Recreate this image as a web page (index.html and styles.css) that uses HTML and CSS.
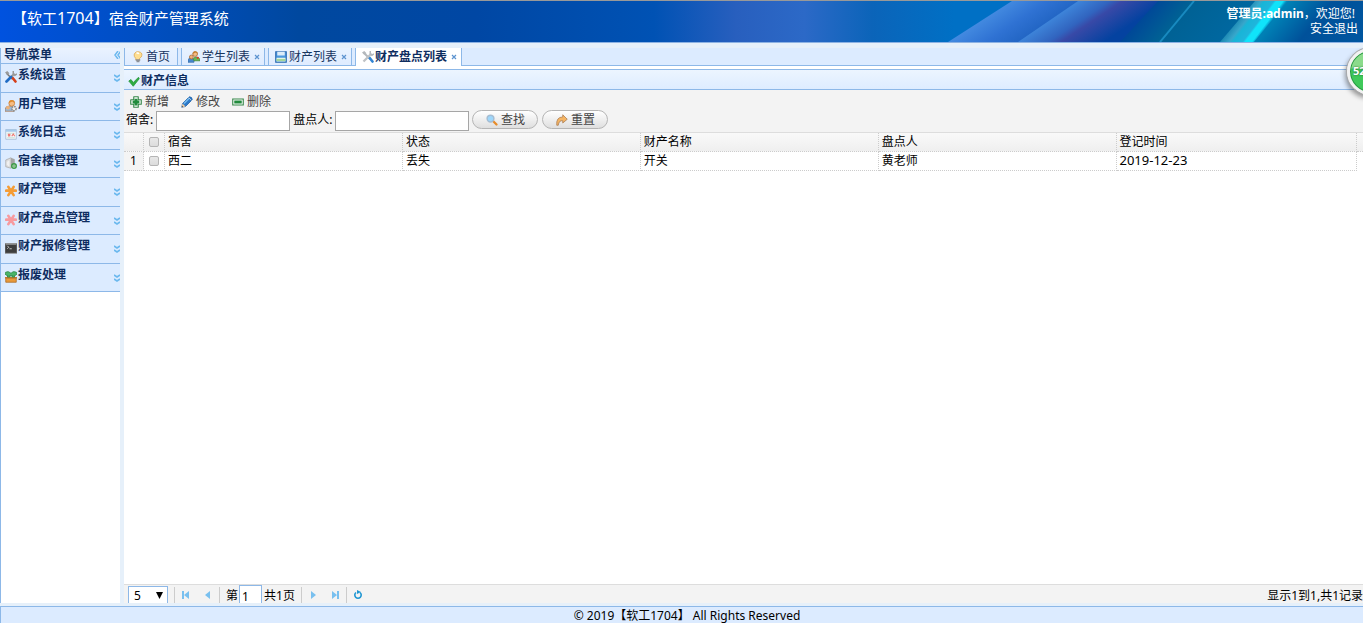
FILE: index.html
```html
<!DOCTYPE html>
<html lang="zh-CN">
<head>
<meta charset="utf-8">
<title>宿舍财产管理系统</title>
<link rel="stylesheet" href="styles.css">
</head>
<body>
<svg class="defs" aria-hidden="true">
  <symbol id="tools" viewBox="0 0 16 16"><path d="M2 2l9 9" stroke="#b4b8bc" stroke-width="2.500"/><path d="M10 9l4 5" stroke="#3285d4" stroke-width="3.500" stroke-linecap="round"/><path d="M12 4L2 14" stroke="#bfc2c5" stroke-width="3"/><path d="M10 0v4l3 3 3-2V3l-2 1-2-1V0z" fill="#b4b8bc"/><path d="M0 2l3-2 3 3-3 2z" fill="#b4b8bc"/></symbol>
  <symbol id="system" viewBox="0 0 16 16"><path d="M2 3l8 8" stroke="#777" stroke-width="2"/><path d="M10 9l4 5" stroke="#d5401c" stroke-width="3.500" stroke-linecap="round"/><path d="M12 4L8 8" stroke="#999" stroke-width="2.500"/><path d="M8 8l-6 6" stroke="#216cc4" stroke-width="3.600" stroke-linecap="round"/><path d="M10 0v4l3 3 3-2V3l-2 1-2-1V0zM0 2l3-2 3 3-3 2z" fill="#999"/></symbol>
  <symbol id="users" viewBox="0 0 16 16"><path d="M0 15v-3q1-3 4-3 4 0 4 4v2z" fill="#4787cd" stroke="#376da8"/><circle cx="4.500" cy="8" r="2.600" fill="#f2b078" stroke="#a76a35"/><path d="M7 11q1-3 4-3t5 3v2H8z" fill="#69b951" stroke="#43863a"/><circle cx="9.500" cy="4" r="3.200" fill="#f4bd84" stroke="#a76329"/><path d="M6 4Q7 0 10 .5q3 0 3 3L10 2z" fill="#c4812f"/><circle cx="13" cy="9" r="1.500" fill="#d63c2b"/></symbol>
  <symbol id="usergear" viewBox="0 0 16 16"><path d="M0 15v-3q1-4 6-4 6 0 6 5v2z" fill="#9ab9d8" stroke="#a9764e"/><circle cx="9" cy="4.500" r="3.800" fill="#f5bd84" stroke="#c07a35"/><path d="M5 4Q5 0 9 0q4 0 4 4l-3-2z" fill="#e08a2c"/><circle cx="12" cy="11.500" r="2.800" fill="#eee" stroke="#888" stroke-width="2" stroke-dasharray="2 1"/><circle cx="4" cy="10" r="2.500" fill="#edb27a"/></symbol>
  <symbol id="log" viewBox="0 0 16 16"><path d="M1 2h14v13H1z" fill="#f4f8fc" stroke="#9eb4cc"/><path d="M1 2h14v3H1z" fill="#a6cbed"/><path d="M3 7h10M3 13h10" stroke="#b8d9ca"/><path d="M4 8l3 3M7 8l-3 3M9 11l2-3 2 3" fill="none" stroke="#ef7770" stroke-width="1.500"/></symbol>
  <symbol id="building" viewBox="0 0 16 16"><path d="M1 4l7-3v14l-7-2z" fill="#ddd" stroke="#aaa"/><path d="M8 1l5 2v11H8z" fill="#a5a5a5"/><path d="M3 6v5M5 5v7" stroke="#fff"/><circle cx="12" cy="12" r="3" fill="#fff" stroke="#3d9a46" stroke-width="2"/><path d="M10 12h4M12 10v4" stroke="#3d9a46"/></symbol>
  <symbol id="star" viewBox="0 0 16 16"><path d="M4.500 2.500l7 11M11.500 2.500l-7 11M1.500 7.500h13" stroke="currentColor" stroke-width="3.500" stroke-linecap="round"/></symbol>
  <symbol id="terminal" viewBox="0 0 16 16"><path d="M0 2h16v13H0z" fill="#3e3e3e" stroke="#888"/><path d="M1 3h14" stroke="#bbb"/><path d="M3 5l2 2-2 2M6 9h3" fill="none" stroke="#eee"/></symbol>
  <symbol id="plants" viewBox="0 0 16 16"><path d="M1 9h14v6H1z" fill="#e99a3b" stroke="#a86722"/><path d="M0 9h16" stroke="#bf782c" stroke-width="2"/><path d="M4 8V4M11 8V4" stroke="#397d37"/><path d="M0 4q0-3 3-3 1-1 5 2 3-3 5-2 3 0 3 3-1 2-4 2l1 2H9l1-2H6l1 2H3l1-2Q1 6 0 4z" fill="#4bb56a" stroke="#2a8642"/></symbol>
  <symbol id="bulb" viewBox="0 0 16 16"><path d="M5 10Q2 7 3 4q2-4 6-3 5 1 4 5 0 2-3 4v2H5z" fill="#ffdf91" stroke="#d9a44f"/><path d="M6 3q2-1 3 1" stroke="#fff" fill="none" stroke-width="2"/><path d="M5 12h6M6 14h4" stroke="#8d9097" stroke-width="2"/></symbol>
  <symbol id="disk" viewBox="0 0 16 16"><path d="M1 1h14v14H1z" fill="#4b98df" stroke="#2c6ab0" stroke-width="1.500"/><path d="M3 1h10v5H3z" fill="#dcecf9"/><path d="M2 9h12v5H2z" fill="#e4f4e2"/><path d="M2 11h12v2H2z" fill="#8fcd83"/></symbol>
  <symbol id="check" viewBox="0 0 16 16"><path d="M1 8l3-2 3 4 7-7 1 2-8 10z" fill="#2ead42" stroke="#249339"/></symbol>
  <symbol id="plus" viewBox="0 0 16 16"><path d="M5 1h6v4h4v6h-4v4H5v-4H1V5h4z" fill="#fff" stroke="#37874a" stroke-width="1.500" stroke-linejoin="round"/><path d="M8 3.500v9M3.500 8h9" stroke="#218b3c" stroke-width="4"/></symbol>
  <symbol id="pencil" viewBox="0 0 16 16"><path d="M1 15l1-5 9-9q4 0 4 4l-9 9z" fill="#2c79c9" stroke="#2262a4"/><path d="M4 10l7-7" stroke="#78bdf1" stroke-width="2"/><path d="M1 15l1-5 4 4z" fill="#f4cda0"/><path d="M1 15l1-2 1 1z" fill="#333"/><path d="M10 2l4 4" stroke="#ddd"/></symbol>
  <symbol id="minus" viewBox="0 0 16 16"><path d="M1 4h14v8H1z" fill="#fff" stroke="#37874a" stroke-width="1.500"/><path d="M3 8h10" stroke="#218b3c" stroke-width="4"/></symbol>
  <symbol id="search" viewBox="0 0 16 16"><path d="M9 9l5 5" stroke="#e78c2a" stroke-width="3" stroke-linecap="round"/><circle cx="6" cy="6" r="4.500" fill="#9ed7fb" stroke="#a5bdd3" stroke-width="2"/></symbol>
  <symbol id="reset" viewBox="0 0 16 16"><path d="M1 15q-1-11 8-11V1l6 6-6 5V9q-5-1-6 6z" fill="#f5b564" stroke="#a8794f" stroke-linejoin="round"/></symbol>
  <symbol id="down" viewBox="0 0 6 8"><path d="M0 1l3 2 3-2M0 5l3 2 3-2" fill="none" stroke="#6bb8ee" stroke-width="1.600"/></symbol>
</svg>

<header class="banner">
  <svg class="banner-art" viewBox="0 0 1363 42" preserveAspectRatio="none" aria-hidden="true">
    <defs>
      <linearGradient id="base"><stop offset="0" stop-color="#0052df"/><stop offset=".11" stop-color="#004ec0"/><stop offset=".22" stop-color="#00489f"/><stop offset=".35" stop-color="#0047a4"/><stop offset=".48" stop-color="#0052b4"/><stop offset=".54" stop-color="#285fbe"/><stop offset=".59" stop-color="#2c69c7"/><stop offset=".64" stop-color="#0b64b9"/><stop offset=".7" stop-color="#0070c5"/></linearGradient>
      <linearGradient id="s1" gradientUnits="userSpaceOnUse" x1="948" y1="42" x2="978" y2="86"><stop offset="0" stop-color="#438ae0"/><stop offset=".4" stop-color="#2f72d3"/><stop offset="1" stop-color="#195cb9"/></linearGradient>
      <linearGradient id="s2" gradientUnits="userSpaceOnUse" x1="1018" y1="42" x2="1052" y2="92"><stop offset="0" stop-color="#3d83d8"/><stop offset=".28" stop-color="#3164bf"/><stop offset=".4" stop-color="#3849a7"/><stop offset=".8" stop-color="#0442a0"/></linearGradient>
      <linearGradient id="s3" gradientUnits="userSpaceOnUse" x1="1120" y1="42" x2="1194" y2="103"><stop offset="0" stop-color="#004798"/><stop offset=".3" stop-color="#006194"/><stop offset="1" stop-color="#006aa4"/></linearGradient>
      <linearGradient id="s4" gradientUnits="userSpaceOnUse" x1="1218" y1="42" x2="1242" y2="60"><stop offset="0" stop-color="#1682ae"/><stop offset=".3" stop-color="#38a6ca"/><stop offset=".4" stop-color="#18b5d7"/><stop offset=".65" stop-color="#20b5dc"/><stop offset=".72" stop-color="#10e3fa"/><stop offset=".9" stop-color="#10e3fa"/><stop offset="1" stop-color="#0088bd"/></linearGradient>
      <linearGradient id="s5" gradientUnits="userSpaceOnUse" x1="1256" y1="42" x2="1319" y2="94"><stop offset="0" stop-color="#0080b5"/><stop offset=".4" stop-color="#00519a"/><stop offset="1" stop-color="#0056a0"/></linearGradient>
    </defs>
    <path fill="url(#base)" d="M0 0h1363v42H0z"/>
    <path fill="url(#s1)" d="M948 42L1012 0h90l-60 42z"/>
    <path fill="url(#s2)" d="M1018 42L1078 0h86l-38 42z"/>
    <path fill="url(#s3)" d="M1120 42L1158 0h125l-38 42z"/>
    <path stroke="#188ac0" stroke-width="2" d="M1160 42L1194 0"/>
    <path fill="url(#s4)" d="M1220 42L1255 0h34l-32 42z"/>
    <path fill="url(#s5)" d="M1254 42L1288 0h75v42z"/>
  </svg>
  <h1 class="brand">【软工<span class="brand-num">1704</span>】宿舍财产管理系统</h1>
  <div class="account"><span class="welcome"><strong>管理员:admin</strong>，欢迎您!</span><a href="#logout">安全退出</a></div>
</header>

<div class="workspace">
  <nav class="sidebar" aria-label="导航菜单">
    <div class="nav-title"><span>导航菜单</span><button class="plain" aria-label="收起"><svg class="arrow" viewBox="0 0 6 8"><path d="M4 0L1 4l3 4M7 0L4 4l3 4" fill="none" stroke="#6bb8ee" stroke-width="1.500"/></svg></button></div>
    <a class="nav-item" href="#system"><svg class="icon"><use href="#system"/></svg><span>系统设置</span><svg class="arrow"><use href="#down"/></svg></a>
    <a class="nav-item" href="#user"><svg class="icon"><use href="#usergear"/></svg><span>用户管理</span><svg class="arrow"><use href="#down"/></svg></a>
    <a class="nav-item" href="#syslog"><svg class="icon"><use href="#log"/></svg><span>系统日志</span><svg class="arrow"><use href="#down"/></svg></a>
    <a class="nav-item" href="#dorm"><svg class="icon"><use href="#building"/></svg><span>宿舍楼管理</span><svg class="arrow"><use href="#down"/></svg></a>
    <a class="nav-item" href="#asset"><svg class="icon orange"><use href="#star"/></svg><span>财产管理</span><svg class="arrow"><use href="#down"/></svg></a>
    <a class="nav-item" href="#inventory"><svg class="icon pink"><use href="#star"/></svg><span>财产盘点管理</span><svg class="arrow"><use href="#down"/></svg></a>
    <a class="nav-item" href="#repair"><svg class="icon"><use href="#terminal"/></svg><span>财产报修管理</span><svg class="arrow"><use href="#down"/></svg></a>
    <a class="nav-item" href="#scrap"><svg class="icon"><use href="#plants"/></svg><span>报废处理</span><svg class="arrow"><use href="#down"/></svg></a>
  </nav>

  <main class="content">
    <div class="tabs">
      <a class="tab" href="#home"><svg class="icon"><use href="#bulb"/></svg><span>首页</span></a>
      <div class="tab closable"><a href="#students"><svg class="icon"><use href="#users"/></svg><span>学生列表</span></a><button class="plain close" aria-label="关闭学生列表"><svg viewBox="0 0 6 6"><path d="M1 1l4 4M5 1L1 5"/></svg></button></div>
      <div class="tab closable"><a href="#assets"><svg class="icon"><use href="#disk"/></svg><span>财产列表</span></a><button class="plain close" aria-label="关闭财产列表"><svg viewBox="0 0 6 6"><path d="M1 1l4 4M5 1L1 5"/></svg></button></div>
      <div class="tab closable active"><a href="#checks"><svg class="icon"><use href="#tools"/></svg><span>财产盘点列表</span></a><button class="plain close" aria-label="关闭财产盘点列表"><svg viewBox="0 0 6 6"><path d="M1 1l4 4M5 1L1 5"/></svg></button></div>
    </div>

    <h2 class="panel-title"><svg class="icon"><use href="#check"/></svg>财产信息</h2>

    <div class="toolbar">
      <div class="actions">
        <button class="plain action"><svg class="icon"><use href="#plus"/></svg>新增</button>
        <button class="plain action"><svg class="icon"><use href="#pencil"/></svg>修改</button>
        <button class="plain action"><svg class="icon"><use href="#minus"/></svg>删除</button>
      </div>
      <form class="filters">
        <label for="dorm-name">宿舍:</label><input class="field" id="dorm-name" type="text">
        <label for="checker">盘点人:</label><input class="field" id="checker" type="text">
        <button class="pill" type="button"><svg class="icon"><use href="#search"/></svg>查找</button>
        <button class="pill" type="button"><svg class="icon"><use href="#reset"/></svg>重置</button>
      </form>
    </div>

    <div class="grid-body">
      <table class="grid">
        <colgroup><col class="c-num"><col class="c-check"><col class="c-data"><col class="c-data"><col class="c-data"><col class="c-data"><col><col class="c-end"></colgroup>
        <thead><tr><th></th><th><input type="checkbox" aria-label="全选"></th><th>宿舍</th><th>状态</th><th>财产名称</th><th>盘点人</th><th>登记时间</th><th></th></tr></thead>
        <tbody><tr><td class="num">1</td><td><input type="checkbox" aria-label="选择第1行"></td><td>西二</td><td>丢失</td><td>开关</td><td>黄老师</td><td class="date">2019-12-23</td><td></td></tr></tbody>
      </table>
    </div>

    <div class="pager">
      <div class="select-wrap"><select class="page-size" aria-label="每页记录数"><option>5</option><option>10</option></select><svg viewBox="0 0 6 6" aria-hidden="true"><path d="M0 0h6L3 6z"/></svg></div>
      <i class="sep"></i>
      <button class="plain page-btn" aria-label="首页"><svg viewBox="0 0 10 10"><path d="M1 1h2v8H1zM8 1v8L3 5z"/></svg></button>
      <button class="plain page-btn" aria-label="上一页"><svg viewBox="0 0 10 10"><path d="M7 1v8L2 5z"/></svg></button>
      <i class="sep"></i>
      <label class="page-label" for="page">第</label><input class="page-input" id="page" type="text" value="1"><span class="page-total">共1页</span>
      <i class="sep"></i>
      <button class="plain page-btn" aria-label="下一页"><svg viewBox="0 0 10 10"><path d="M3 1v8l5-4z"/></svg></button>
      <button class="plain page-btn" aria-label="末页"><svg viewBox="0 0 10 10"><path d="M7 1h2v8H7zM2 1v8l5-4z"/></svg></button>
      <i class="sep"></i>
      <button class="plain page-btn" aria-label="刷新"><svg viewBox="0 0 10 10"><path d="M3 2.500a3.200 3.200 0 1 0 4 0" fill="none" stroke="#1e96d2" stroke-width="1.600"/><path d="M4 0l4 2-4 2z" fill="#1e96d2"/></svg></button>
      <span class="summary">显示1到1,共1记录</span>
    </div>
  </main>
</div>
<footer class="footer">© 2019【软工1704】 All Rights Reserved</footer>
<div class="badge">52</div>
</body>
</html>
```
FILE: styles.css
```css
* { box-sizing: border-box; }
body {
  margin: 0;
  height: 100vh;
  display: flex;
  flex-direction: column;
  overflow: hidden;
  position: relative;
  background: #e6f0fa;
  color: #000;
  font: 12px/16px "Noto Sans", "Noto Sans CJK SC", sans-serif;
}
button, input, select { font: inherit; color: inherit; }
a { color: inherit; text-decoration: none; }
.defs { position: absolute; width: 0; height: 0; }
.icon { width: 12px; height: 12px; flex: none; display: block; }
.plain { border: 0; background: none; padding: 0; display: flex; align-items: center; }

.banner {
  position: relative;
  flex: none;
  display: flex;
  justify-content: space-between;
  min-height: 43px;
  border-top: 1px solid #999;
  border-bottom: 1px solid #8db2e3;
  color: #fff;
}
.banner-art { position: absolute; inset: 0; width: 100%; height: 100%; }
.brand { position: relative; margin: 0; padding: 6px 0 0 12px; font-size: 15px; line-height: 22px; font-weight: 400; }
.brand-num { font-size: 16px; }
.account { position: relative; display: flex; flex-direction: column; align-items: flex-end; padding: 5px 5px 0 0; line-height: 15px; }
.welcome { margin-right: 3px; }

.workspace { flex: 1; min-height: 0; display: flex; gap: 4px; padding: 5px 0 3px; }
.sidebar { width: 120px; flex: none; background: #fff; border-left: 1px solid #8db8e8; color: #0e2d5f; font-weight: 700; overflow: hidden; }
.nav-title { display: flex; justify-content: space-between; align-items: center; height: 16px; padding: 0 0 2px 3px; overflow: hidden; border-bottom: 1px solid #8db8e8; background: linear-gradient(#eaf3ff, #deebff); line-height: 12px; }
.arrow { width: 6px; height: 8px; flex: none; }
.nav-item { display: flex; height: 28px; padding: 3px 0 0 4px; background: #dcebff; border-bottom: 1px solid #8db8e8; }
.nav-item:nth-of-type(odd) { height: 29px; }
.nav-item .icon { margin-top: 4px; }
.nav-item span { flex: 1; margin-left: 1px; white-space: nowrap; }
.nav-item .arrow { margin-top: 7px; }
.orange { color: #f49c35; }
.pink { color: #f79a9f; }

.content { flex: 1; min-width: 0; display: flex; flex-direction: column; background: #fff; overflow: hidden; }
.tabs { flex: none; display: flex; gap: 3px; height: 18px; background: #dcebff; border-bottom: 1px solid #8db8e8; margin-bottom: 3px; }
.tab { display: flex; align-items: center; border: solid #8db8e8; border-width: 0 1px; padding: 0 7px; background: linear-gradient(#e8f2ff, #dfecff); color: #17355f; white-space: nowrap; }
.tab a { display: flex; align-items: center; }
.tab .icon { margin-right: 2px; }
.tab.closable { padding: 0 4px 0 6px; }
.close { margin-left: 4px; }
.close svg { width: 6px; height: 6px; stroke: #5c93cf; stroke-width: 1.2px; }
.tab.active { background: #fff; margin-bottom: -1px; font-weight: 700; color: #0e2d5f; }
.tab.active .icon { margin-right: 1px; }
.panel-title { flex: none; display: flex; align-items: center; gap: 1px; margin: 0; padding: 2px 4px 0; height: 21px; border: solid #8db8e8; border-width: 1px 0; background: linear-gradient(#ecf5ff, #deecff); font-size: 12px; color: #0e2d5f; }

.toolbar { flex: none; background: #f3f3f3; border-bottom: 1px solid #ddd; padding: 3px 2px 1px; }
.actions { display: flex; gap: 12px; padding-left: 4px; height: 17px; }
.action { gap: 3px; color: #444; }
.filters { display: flex; gap: 3px; height: 21px; }
.filters label { padding-top: 2px; }
.field { width: 134px; height: 20px; margin-top: 1px; border: 1px solid #a6a6a6; background: #fff; padding: 1px; }
.pill { width: 66px; height: 19px; margin-right: 1px; padding: 0; display: flex; align-items: center; justify-content: center; gap: 3px; border: 1px solid #b5b5b5; border-radius: 10px; background: linear-gradient(#fff, #dfdfdf); color: #444; }

.grid-body { flex: 1; min-height: 0; overflow: hidden; }
.grid { width: 100%; table-layout: fixed; border-collapse: separate; border-spacing: 0; }
.c-num { width: 20px; }
.c-check { width: 21px; }
.c-data { width: 19.2%; }
.c-end { width: 6px; }
.grid th, .grid td { height: 19px; padding: 0 3px; text-align: left; font-weight: 400; line-height: 16px; border: dotted #ccc; border-width: 0 1px 1px 0; }
.grid th { background: linear-gradient(#f9f9f9, #efefef); }
.grid th:last-child { border-right: 0; }
.grid td:last-child { border: 0; }
.grid .num { background: #f4f4f4; text-align: center; padding: 0; }
.grid .date { font-size: 13px; line-height: 14px; padding-bottom: 2px; }
.grid input { appearance: none; display: block; margin: 0 0 0 2px; width: 10px; height: 10px; border: 1px solid #b5b5b5; border-radius: 2px; background: linear-gradient(#e8e8e8, #dcdcdc); }

.pager { flex: none; display: flex; align-items: center; height: 19px; padding-left: 4px; background: #f3f3f3; border-top: 1px solid #ddd; white-space: nowrap; overflow: hidden; }
.select-wrap { position: relative; align-self: flex-start; margin-top: 1px; }
.select-wrap svg { position: absolute; right: 5px; top: 6px; width: 7px; height: 7px; pointer-events: none; }
.page-size { display: block; appearance: none; width: 40px; height: 20px; padding: 0 5px; border: 1px solid #8db8e8; border-radius: 0; background: #fff; }
.sep { width: 1px; height: 16px; margin: 2px 6px 0; background: #ccc; }
.page-btn svg { display: block; width: 10px; height: 10px; fill: #79c0ef; }
.page-btn + .page-btn { margin-left: 12px; }
.page-label, .page-total { margin-top: 4px; }
.page-input { align-self: flex-start; width: 23px; height: 22px; margin: 0 2px 0 1px; padding: 2px; border: 1px solid #8db8e8; background: #fff; }
.page-btn { margin-top: 2px; }
.summary { margin: 4px 0 0 auto; }

.footer { flex: none; height: 17px; padding-top: 2px; border: solid #8db8e8; border-width: 1px 0 0 1px; background: #dcebff; line-height: 14px; padding-left: 10px; text-align: center; }
.badge { position: absolute; right: -31px; top: 48px; width: 47px; height: 47px; border: 3px solid #f2f2f2; border-radius: 50%; background: linear-gradient(#8bdb8b 0 40%, #3fc95a 45%); box-shadow: 0 0 0 1px #aaa, -2px 3px 5px #0006, inset 0 0 0 1px #279643; color: #fff; font-size: 11px; line-height: 39px; padding-left: 3px; font-weight: 700; text-shadow: 0 0 2px #175d27; }
```
